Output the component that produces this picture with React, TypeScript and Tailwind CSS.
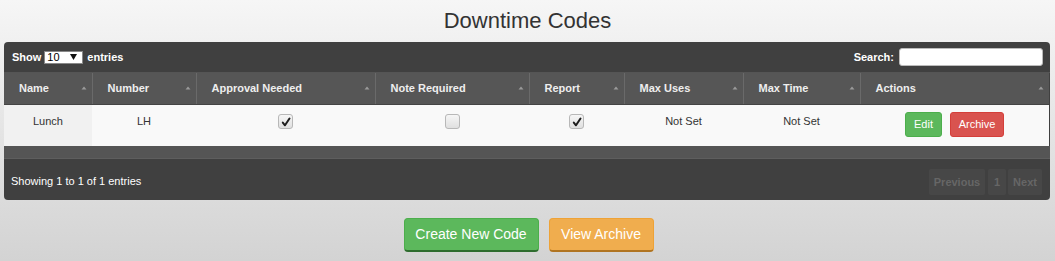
import React from "react";

const font = { fontFamily: '"Liberation Sans", Arial, sans-serif' };

function SortIcon() {
  return (
    <svg width="6" height="4" viewBox="0 0 6 4" className="shrink-0">
      <path d="M3 0.5 L5.5 3.5 L0.5 3.5 Z" fill="#9a9a9a" />
    </svg>
  );
}

function Check({ checked }: { checked: boolean }) {
  return (
    <span className="inline-flex h-[15px] w-[15px] items-center justify-center rounded-[3px] border border-[#b8b8b8] bg-gradient-to-b from-[#f6f6f6] to-[#e0e0e0] align-middle">
      {checked && (
        <svg width="10" height="10" viewBox="0 0 10 10">
          <path d="M1.8 5.6 L4 8.3 L8.5 1.5" stroke="#1e1e1e" strokeWidth="2" fill="none" strokeLinecap="round" strokeLinejoin="round" />
        </svg>
      )}
    </span>
  );
}

const cols = [
  { name: "Name", w: 88 },
  { name: "Number", w: 104 },
  { name: "Approval Needed", w: 179 },
  { name: "Note Required", w: 154 },
  { name: "Report", w: 95 },
  { name: "Max Uses", w: 119 },
  { name: "Max Time", w: 117 },
  { name: "Actions", w: 189 },
];

export default function App() {
  return (
    <div
      className="min-h-screen w-full bg-gradient-to-b from-[#f6f6f6] to-[#d3d3d3] pt-[8px] text-[#333]"
      style={font}
    >
      <h1 className="text-center text-[22px] leading-[26px] font-normal text-[#333]">Downtime Codes</h1>

      <div className="ml-[4px] mt-[8px] w-[1046px] overflow-hidden rounded-[4px] bg-[#404040]">
        {/* top bar */}
        <div className="flex h-[31px] items-center justify-between border-b border-[#555] pl-[8px] pr-[7px] text-[11px] font-bold text-white">
          <div className="flex items-center">
            <span>Show</span>
            <span className="ml-[3px] flex h-[13px] w-[39px] items-center justify-between border border-[#888] bg-white pl-[2px] pr-[5px] text-[11px] font-normal leading-none text-black">
              <span>10</span>
              <svg width="7" height="6" viewBox="0 0 7 6">
                <path d="M0 0 H7 L3.5 6 Z" fill="#111" />
              </svg>
            </span>
            <span className="ml-[4px]">entries</span>
          </div>
          <div className="flex items-center">
            <span>Search:</span>
            <span className="ml-[5px] block h-[18px] w-[144px] rounded-[3px] border border-[#bbb] bg-white" />
          </div>
        </div>

        <table className="w-[1045px] table-fixed border-collapse text-[11px]">
          <colgroup>
            {cols.map((c) => (
              <col key={c.name} style={{ width: c.w }} />
            ))}
          </colgroup>
          <thead>
            <tr className="h-[31px] bg-[#565656]">
              {cols.map((c, i) => (
                <th
                  key={c.name}
                  className={`border-b border-[#444] p-0 text-left font-bold text-[#eeeeee] ${i > 0 ? "border-l border-l-[#6a6a6a]" : ""}`}
                >
                  <div className="flex items-center justify-between pl-[15px] pr-[5px]">
                    <span>{c.name}</span>
                    <SortIcon />
                  </div>
                </th>
              ))}
            </tr>
          </thead>
          <tbody>
            <tr className="h-[42px] bg-[#f9f9f9] text-center align-top text-[#333]">
              <td className="bg-[#f1f1f1] pt-[8px]">Lunch</td>
              <td className="pt-[8px]">LH</td>
              <td className="pt-[8px]">
                <Check checked />
              </td>
              <td className="pt-[8px]">
                <Check checked={false} />
              </td>
              <td className="pt-[8px]">
                <Check checked />
              </td>
              <td className="pt-[8px]">Not Set</td>
              <td className="pt-[8px]">Not Set</td>
              <td className="pt-[7px]">
                <div className="flex items-center justify-center gap-[8px]">
                  <span className="flex h-[25px] w-[37px] items-center justify-center rounded-[3px] border border-[#4cae4c] bg-[#5cb85c] text-white">
                    Edit
                  </span>
                  <span className="flex h-[25px] w-[54px] items-center justify-center rounded-[3px] border border-[#d43f3a] bg-[#d9534f] text-white">
                    Archive
                  </span>
                </div>
              </td>
            </tr>
          </tbody>
        </table>

        <div className="h-[13px] border-b border-[#5e5e5e] bg-[#555]" />

        {/* footer */}
        <div className="flex h-[41px] items-center justify-between pl-[7px] pr-[8px] text-[11px] text-white">
          <span className="pt-[4px]">Showing 1 to 1 of 1 entries</span>
          <div className="flex items-center gap-[2px] pt-[5px] font-bold text-[#666]">
            <span className="flex h-[26px] w-[56px] items-center justify-center rounded-[2px] bg-[#474747]">Previous</span>
            <span className="ml-[1px] flex h-[26px] w-[18px] items-center justify-center rounded-[2px] bg-[#474747]">1</span>
            <span className="flex h-[26px] w-[34px] items-center justify-center rounded-[2px] bg-[#474747]">Next</span>
          </div>
        </div>
      </div>

      <div className="mt-[18px] flex justify-center gap-[10px] pl-[2px]">
        <span className="flex h-[34px] w-[135px] items-center justify-center rounded-[4px] border border-[#4cae4c] border-b-[2px] border-b-[#2f6d2f] bg-[#5cb85c] text-[14px] text-white">
          Create New Code
        </span>
        <span className="flex h-[34px] w-[105px] items-center justify-center rounded-[4px] border border-[#eea236] border-b-[2px] border-b-[#b07421] bg-[#f0ad4e] text-[14px] text-white">
          View Archive
        </span>
      </div>
    </div>
  );
}
